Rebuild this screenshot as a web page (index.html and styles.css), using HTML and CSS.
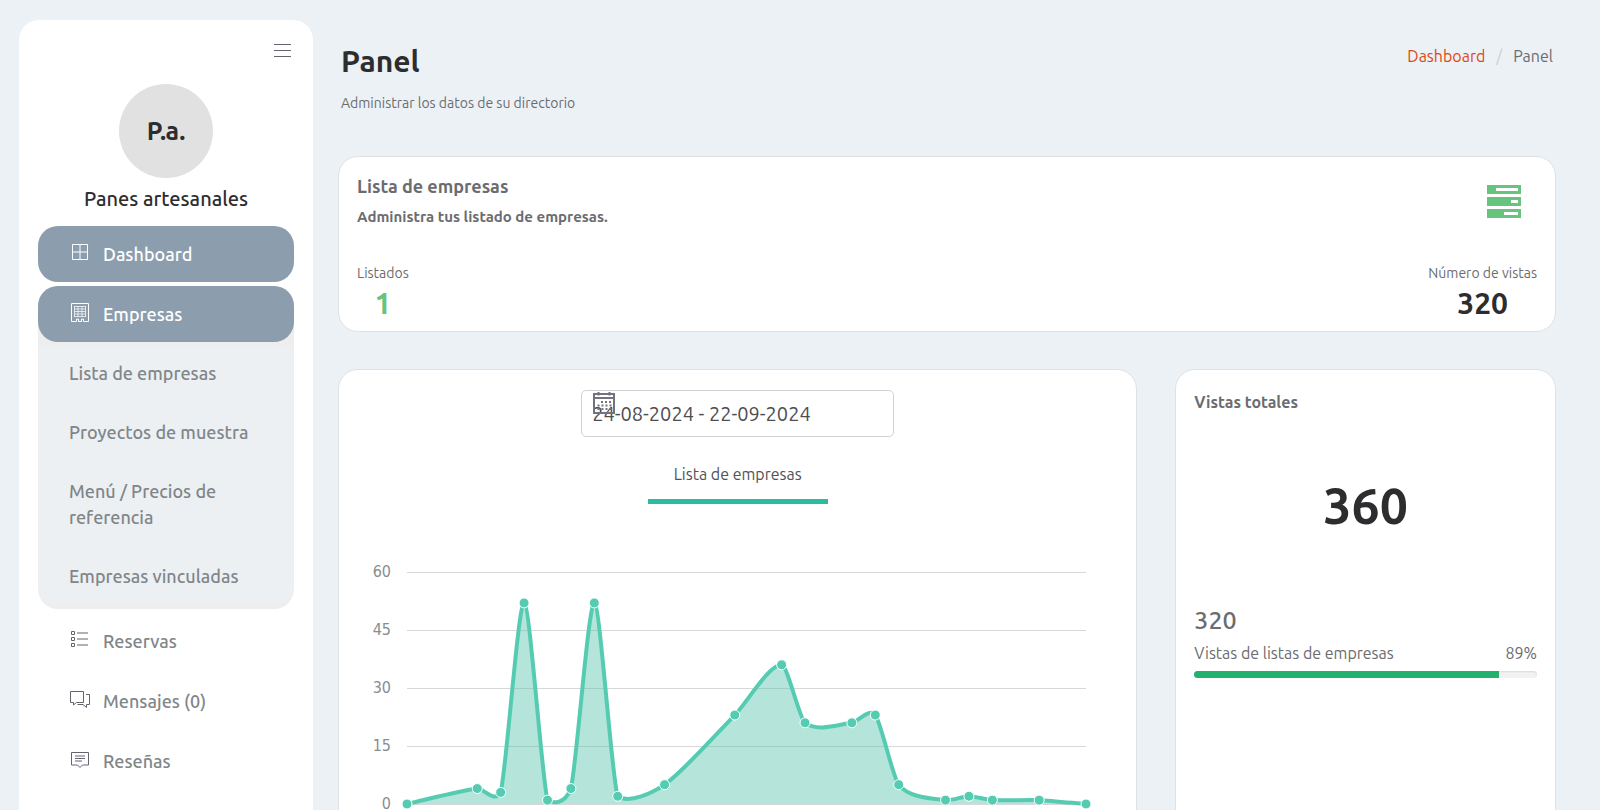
FILE: index.html
```html
<!DOCTYPE html>
<html lang="es">
<head>
    <meta charset="UTF-8">
    <meta name="viewport" content="width=device-width, initial-scale=1.0">
    <title>Panel - Panes artesanales</title>
    <link rel="stylesheet" href="styles.css">
</head>
<body>

<div class="layout">
    <aside class="sidebar">
        <button class="menu-toggle" type="button" aria-label="Menú">
            <svg width="18" height="14" viewBox="0 0 18 14"><path d="M0 .5h17M0 6.5h17M0 12.5h17"/></svg>
        </button>
        <div class="avatar">P.a.</div>
        <h2 class="company">Panes artesanales</h2>

        <nav class="nav">
            <a class="nav-item active" href="#">
                <svg width="22" height="22" viewBox="0 0 22 22"><path d="M3.5 3.5h15v15h-15zM11 3.5v15M3.5 11h15"/></svg>
                Dashboard
            </a>
            <div class="nav-group">
                <a class="nav-item active" href="#">
                    <svg width="22" height="22" viewBox="0 0 22 22"><path d="M2.5 2.500h17v18h-5v-2.500h-2v2.500h-3v-2.500h-2v2.500h-5z"/><path class="windows" d="M5 5.500h12M5 8h12M5 10.500h12M5 13h12M5 15.500h12M5.500 5v11M9 5v11M13 5v11M16.500 5v11"/></svg>
                    Empresas
                </a>
                <div class="submenu">
                    <a class="submenu-item" href="#">Lista de empresas</a>
                    <a class="submenu-item" href="#">Proyectos de muestra</a>
                    <a class="submenu-item" href="#">Menú / Precios de referencia</a>
                    <a class="submenu-item" href="#">Empresas vinculadas</a>
                </div>
            </div>
            <a class="nav-item" href="#">
                <svg width="22" height="22" viewBox="0 0 22 22"><path d="M2.5 3.5h3v3h-3zM2.5 9.500h3v3h-3zM2.5 15.500h3v3h-3zM8 5h11M8 11h11M8 17h11"/></svg>
                Reservas
            </a>
            <a class="nav-item" href="#">
                <svg width="22" height="22" viewBox="0 0 22 22"><path d="M1.5 3.5h13v11H7.5l-3 2.500v-2.500h-3zM17 6.500h3.500v10h-3v3l-3.500-3H8.500"/></svg>
                Mensajes (0)
            </a>
            <a class="nav-item" href="#">
                <svg width="22" height="22" viewBox="0 0 22 22"><path d="M2.5 4.500h17v12.500h-6L11 19.500l-2.500-2.500h-6zM6 8h10M6 10.500h10M6 13h7"/></svg>
                Reseñas
            </a>
        </nav>
    </aside>

    <main class="main">
        <header class="page-header">
            <div>
                <h1>Panel</h1>
                <p>Administrar los datos de su directorio</p>
            </div>
            <nav class="breadcrumb">
                <a href="#">Dashboard</a>
                <span class="separator">/</span>
                <span>Panel</span>
            </nav>
        </header>

        <div class="cards">
            <section class="card summary">
                <div class="row">
                    <div>
                        <h3>Lista de empresas</h3>
                        <h4>Administra tus listado de empresas.</h4>
                    </div>
                    <svg class="server-icon" width="34" height="34" viewBox="0 0 34 34"><path fill-rule="evenodd" d="M0 0h34v9H0zM9 3v3h22V3zM0 12h34v9H0zM24 15v3h7v-3zM0 24h34v9H0zM17 27v3h14v-3z"/></svg>
                </div>
                <div class="row">
                    <div class="stat green">
                        <span>Listados</span>
                        <strong>1</strong>
                    </div>
                    <div class="stat">
                        <span>Número de vistas</span>
                        <strong>320</strong>
                    </div>
                </div>
            </section>

            <section class="card statistics">
                <div class="date-range">
                    <svg width="22" height="22" viewBox="0 0 22 22"><path d="M1 2h20v19H1zM1 6h20M5.500 0v3.500M16.500 0v3.500"/><path class="dots" d="M8 10h10.500M4.500 13.500h14M4.500 17h14"/></svg>
                    <input type="text" value="24-08-2024 - 22-09-2024" aria-label="Rango de fechas">
                </div>
                <button class="tab" type="button">Lista de empresas</button>
                <svg id="chart" class="chart"></svg>
            </section>

            <section class="card totals">
                <h3>Vistas totales</h3>
                <div class="total">360</div>
                <div class="subtotal">320</div>
                <div class="row">
                    <span>Vistas de listas de empresas</span>
                    <span>89%</span>
                </div>
                <div class="progress"><div class="progress-bar" style="width: 89%"></div></div>
            </section>
        </div>
    </main>
</div>

<script>
    // [day index, views]
    const data = [[0, 0], [3, 4], [4, 3], [5, 52], [6, 1], [7, 4], [8, 52], [9, 2], [11, 5], [14, 23],
        [16, 36], [17, 21], [19, 21], [20, 23], [21, 5], [23, 1], [24, 2], [25, 1], [27, 1], [29, 0]];
    const days = 29;
    const maxViews = 60;

    function drawChart() {
        const svg = document.getElementById("chart");
        const left = 50;
        const right = svg.clientWidth - 32;
        const top = 20;
        const bottom = 252;

        const points = data.map(([day, views]) => ({
            x: left + (right - left) * day / days,
            y: bottom - (bottom - top) * views / maxViews
        }));

        // Slope at each point, taken from its neighbours
        const slopes = points.map((p, i) => {
            const prev = points[i - 1] || p;
            const next = points[i + 1] || p;
            return (next.y - prev.y) / (next.x - prev.x);
        });

        let line = `M${points[0].x} ${points[0].y}`;
        for (let i = 1; i < points.length; i++) {
            const a = points[i - 1];
            const b = points[i];
            const dx = (b.x - a.x) / 4;
            const y1 = Math.min(bottom, a.y + dx * slopes[i - 1]);
            const y2 = Math.min(bottom, b.y - dx * slopes[i]);
            line += `C${a.x + dx},${y1} ${b.x - dx},${y2} ${b.x},${b.y}`;
        }

        let html = "";
        for (let value = 0; value <= maxViews; value += 15) {
            const y = bottom - (bottom - top) * value / maxViews;
            html += `<line class="grid" x1="${left}" x2="${right}" y1="${y + 0.5}" y2="${y + 0.5}"/>`;
            html += `<text x="${left - 16}" y="${y + 5}">${value}</text>`;
        }
        html += `<path class="area" d="${line}V${bottom}H${left}Z"/>`;
        html += `<path class="line" d="${line}"/>`;
        for (const p of points) {
            html += `<circle cx="${p.x}" cy="${p.y}" r="5"/>`;
        }
        svg.innerHTML = html;
    }

    drawChart();
    window.addEventListener("resize", drawChart);
</script>

</body>
</html>
```
FILE: styles.css
```css
* {
    box-sizing: border-box;
}
body {
    margin: 0;
    background: #ecf1f6;
    color: #6b6c70;
    font-family: Ubuntu, "Noto Sans", sans-serif;
    font-size: 16px;
    line-height: 24px;
}
h1, h2, h3, h4, p {
    margin: 0;
}
a {
    text-decoration: none;
}
button, input {
    font-family: inherit;
}
.layout {
    display: flex;
    height: 100vh;
    overflow: hidden;
}

/* Sidebar */
.sidebar {
    flex: 0 0 294px;
    margin: 20px 0 0 19px;
    padding: 0 19px;
    background: #fff;
    border-radius: 20px 20px 0 0;
}
.menu-toggle {
    display: block;
    margin: 20px 0 24px auto;
    padding: 4px 2px 2px;
    height: 20px;
    border: none;
    background: none;
    cursor: pointer;
}
.menu-toggle svg {
    display: block;
    stroke: #66636e;
    stroke-width: 1;
}
.avatar {
    width: 94px;
    height: 94px;
    margin: 0 auto;
    border-radius: 50%;
    background: #e1e1e1;
    color: #2d2d2f;
    font-size: 25px;
    font-weight: 700;
    line-height: 94px;
    text-align: center;
}
.company {
    margin: 8px 0 14px;
    color: #2d2d2f;
    font-size: 20px;
    font-weight: 500;
    line-height: 26px;
    text-align: center;
}
.nav {
    display: flex;
    flex-direction: column;
    gap: 4px;
}
.nav-item {
    display: flex;
    align-items: center;
    gap: 12px;
    height: 56px;
    padding: 0 31px;
    border-radius: 20px;
    color: #808689;
    font-size: 18px;
    font-weight: 500;
}
.nav-item svg {
    margin-bottom: 4px;
    fill: none;
    stroke: #66636e;
    stroke-width: 1;
}
.nav-item.active {
    background: #8c9dae;
    color: #fff;
}
.nav-item.active svg {
    stroke: #fff;
}
.nav-item .windows {
    stroke-opacity: 0.7;
}
.nav-group {
    background: linear-gradient(#eee 60px, #edf0f3 60px);
    border-bottom: 5px solid #eee;
    border-radius: 20px;
}
.submenu {
    display: flex;
    flex-direction: column;
    gap: 3px;
    padding-top: 3px;
}
.submenu-item {
    padding: 15px 31px;
    color: #808689;
    font-size: 18px;
    font-weight: 500;
    line-height: 26px;
}

/* Content */
.main {
    flex: 1;
    min-width: 0;
    padding: 40px 44px 38px 25px;
}
.page-header {
    display: flex;
    justify-content: space-between;
    margin-bottom: 39px;
    padding: 0 3px;
}
.page-header h1 {
    color: #2d2d2f;
    font-size: 30px;
    font-weight: 700;
    line-height: 42px;
}
.page-header p {
    margin-top: 7px;
    font-size: 14px;
    line-height: 28px;
}
.breadcrumb {
    display: flex;
    gap: 11px;
    padding-top: 4px;
}
.breadcrumb a {
    color: #dd4814;
}
.separator {
    color: #c8d0d0;
}
.cards {
    display: grid;
    grid-template-columns: repeat(12, minmax(0, 1fr));
    gap: 37px 38px;
}
.card {
    padding: 20px 18px;
    background: #fff;
    border: 1px solid #dfe2e4;
    border-radius: 20px;
}
.row {
    display: flex;
    justify-content: space-between;
}
.summary {
    grid-column: span 12;
    padding: 17px 18px 10px;
}
.summary h3 {
    font-size: 18px;
    font-weight: 700;
}
.summary h4 {
    margin: 7px 0 32px;
    font-size: 15px;
    font-weight: 700;
}
.server-icon {
    margin: 11px 16px 0;
    fill: #67c47e;
}
.stat {
    display: flex;
    flex-direction: column;
    align-items: center;
    font-size: 14px;
}
.stat strong {
    color: #2d2d2f;
    font-size: 30px;
    line-height: 36px;
}
.stat.green strong {
    color: #67c47e;
}
.statistics {
    grid-column: span 8;
    display: flex;
    flex-direction: column;
    align-items: center;
    height: 620px;
}
.date-range {
    position: relative;
    width: 313px;
}
.date-range svg {
    position: absolute;
    top: 2px;
    left: 12px;
    fill: none;
    stroke: #74727c;
    stroke-width: 2;
}
.date-range .dots {
    stroke-dasharray: 2 2;
}
.date-range input {
    width: 100%;
    height: 47px;
    padding: 0 10px;
    border: 1px solid #d2d2d4;
    border-radius: 5px;
    background: transparent;
    color: #4e4e52;
    font-size: 20px;
}
.tab {
    margin-top: 17px;
    padding: 8px 26px 12px;
    border: none;
    border-bottom: 5px solid #2bbb9f;
    background: none;
    color: #515256;
    font-size: 16px;
    line-height: 25px;
    cursor: pointer;
}
.chart {
    width: 100%;
    height: 290px;
    margin-top: 48px;
}
.chart text {
    fill: #8a8d8f;
    font-family: "DejaVu Sans Condensed", "Noto Sans", sans-serif;
    font-size: 16px;
    text-anchor: end;
}
.chart .grid {
    stroke: #d8d8d8;
    stroke-width: 1;
}
.chart .area {
    fill: #53c2a9;
    fill-opacity: 0.43;
}
.chart .line {
    fill: none;
    stroke: #55ccb2;
    stroke-width: 4;
}
.chart circle {
    fill: #55ccb2;
    stroke: #fff;
    stroke-width: 1;
}
.totals {
    grid-column: span 4;
}
.totals h3 {
    font-size: 16px;
    font-weight: 700;
}
.total {
    margin: 61px 0 70px;
    color: #2d2d2f;
    font-size: 50px;
    font-weight: 700;
    line-height: 60px;
    text-align: center;
}
.subtotal {
    margin-bottom: 6px;
    font-size: 25px;
    font-weight: 500;
    line-height: 30px;
}
.progress {
    height: 7px;
    margin-top: 6px;
    overflow: hidden;
    border-radius: 4px;
    background: #f2f2f2;
    box-shadow: inset 0 1px 2px rgba(0, 0, 0, 0.1);
}
.progress-bar {
    height: 100%;
    background: #22b26d;
}
```
